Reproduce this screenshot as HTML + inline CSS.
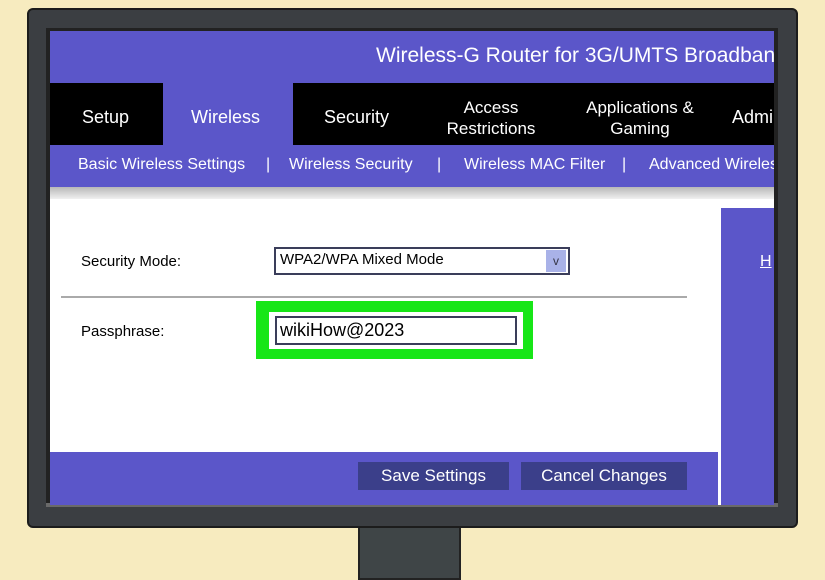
<!DOCTYPE html>
<html><head><style>
*{margin:0;padding:0;box-sizing:border-box}
body{width:825px;height:575px;background:#f7ebbf;position:relative;overflow:hidden;font-family:"Liberation Sans",sans-serif}
.a{position:absolute}
.blue{background:#5b56c9}
.s{color:#fff;font-size:16px;top:156px;white-space:nowrap}
</style></head><body>
<div class="a" style="left:358px;top:520px;width:103px;height:60px;background:#3f4547;border:2px solid #222"></div>
<div class="a" style="left:27px;top:8px;width:771px;height:520px;background:#3b3e42;border:2px solid #1c1c1c;border-radius:6px"></div>
<div class="a" style="left:46px;top:28px;width:732px;height:479px;background:#222;border-bottom:4px solid #6a6a6a"></div>
<div class="a blue" style="left:50px;top:31px;width:724px;height:52px"></div>
<div class="a" style="left:50px;top:31px;width:724px;height:52px;overflow:hidden"><div class="a" style="left:326px;top:13px;color:#fff;font-size:21px;white-space:nowrap">Wireless-G Router for 3G/UMTS Broadband</div></div>
<div class="a" style="left:50px;top:83px;width:724px;height:62px;background:#000"></div>
<div class="a blue" style="left:163px;top:83px;width:130px;height:62px"></div>
<div class="a" style="left:82px;top:107px;color:#fff;font-size:18px">Setup</div>
<div class="a" style="left:191px;top:107px;color:#fff;font-size:18px">Wireless</div>
<div class="a" style="left:324px;top:107px;color:#fff;font-size:18px">Security</div>
<div class="a" style="left:440px;top:97px;width:102px;text-align:center;color:#fff;font-size:17px;line-height:21px">Access<br>Restrictions</div>
<div class="a" style="left:577px;top:97px;width:126px;text-align:center;color:#fff;font-size:17px;line-height:21px">Applications &amp;<br>Gaming</div>
<div class="a" style="left:732px;top:107px;width:42px;overflow:hidden;color:#fff;font-size:18px;white-space:nowrap">Admin</div>
<div class="a blue" style="left:50px;top:145px;width:724px;height:42px"></div>
<div class="a" style="left:50px;top:145px;width:724px;height:42px;overflow:hidden">
<div class="a s" style="left:28px;top:11px">Basic Wireless Settings</div>
<div class="a s" style="left:216px;top:11px">|</div>
<div class="a s" style="left:239px;top:11px">Wireless Security</div>
<div class="a s" style="left:387px;top:11px">|</div>
<div class="a s" style="left:414px;top:11px">Wireless MAC Filter</div>
<div class="a s" style="left:572px;top:11px">|</div>
<div class="a s" style="left:599px;top:11px">Advanced Wireless</div>
</div>
<div class="a" style="left:50px;top:187px;width:724px;height:12px;background:linear-gradient(#b8b8b8,#f0f0f0)"></div>
<div class="a" style="left:50px;top:199px;width:724px;height:306px;background:#fff"></div>
<div class="a blue" style="left:721px;top:208px;width:53px;height:297px"></div>
<div class="a" style="left:760px;top:253px;color:#fff;font-size:16px;text-decoration:underline">H</div>
<div class="a" style="left:81px;top:253px;font-size:15px;color:#000">Security Mode:</div>
<div class="a" style="left:274px;top:247px;width:296px;height:28px;border:2px solid #3a3d5a;background:#fff"></div>
<div class="a" style="left:280px;top:251px;font-size:15px">WPA2/WPA Mixed Mode</div>
<div class="a" style="left:546px;top:250px;width:20px;height:22px;background:#a9b2e8;color:#334;font-size:12px;text-align:center;line-height:22px">v</div>
<div class="a" style="left:61px;top:296px;width:626px;height:2px;background:#aaa"></div>
<div class="a" style="left:256px;top:301px;width:277px;height:58px;background:#17e617"></div>
<div class="a" style="left:269px;top:312px;width:254px;height:37px;background:#fff"></div>
<div class="a" style="left:275px;top:316px;width:242px;height:29px;border:2px solid #3a3d5a;background:#fff"></div>
<div class="a" style="left:280px;top:320px;font-size:18px">wikiHow@2023</div>
<div class="a" style="left:81px;top:323px;font-size:15px">Passphrase:</div>
<div class="a blue" style="left:50px;top:452px;width:668px;height:53px"></div>
<div class="a" style="left:358px;top:462px;width:151px;height:28px;background:#3b3f8a;color:#fff;font-size:17px;text-align:center;line-height:28px">Save Settings</div>
<div class="a" style="left:521px;top:462px;width:166px;height:28px;background:#3b3f8a;color:#fff;font-size:17px;text-align:center;line-height:28px">Cancel Changes</div>
</body></html>
